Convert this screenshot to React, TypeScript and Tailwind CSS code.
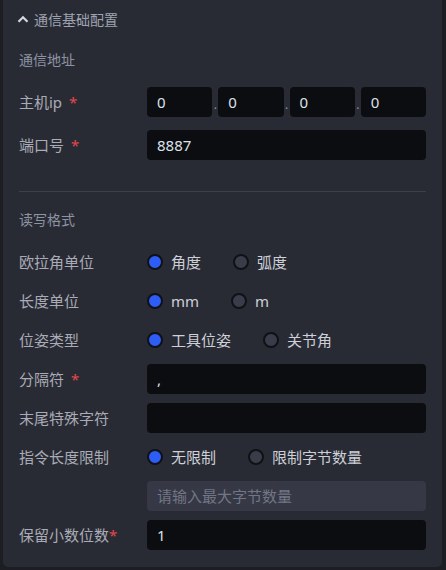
import React from "react";

const font = { fontFamily: "'Noto Sans', 'Noto Sans CJK SC', sans-serif" };

const Req = ({ tight }: { tight?: boolean }) => (
  <span className={`text-[#e5484d] ${tight ? "" : "ml-[7px]"}`}>*</span>
);

const Row = ({ label, children }: { label: React.ReactNode; children: React.ReactNode }) => (
  <div className="flex h-[30px] items-center">
    <div className="w-[128px] shrink-0 text-[15px] text-[#a9acb6]">{label}</div>
    <div className="flex flex-1 items-center">{children}</div>
  </div>
);

const Input = ({ value, placeholder, disabled }: { value?: string; placeholder?: string; disabled?: boolean }) => (
  <div
    className={`flex h-[30px] flex-1 items-center rounded-[4px] px-[10px] text-[15px] ${
      disabled ? "bg-[#363846] text-[#727684]" : "bg-[#0c0d11] text-[#dde1eb]"
    }`}
  >
    {value || placeholder}
  </div>
);

const Radio = ({ options, active }: { options: string[]; active: number }) => (
  <div className="flex items-center gap-x-[32px]">
    {options.map((o, i) => (
      <div key={o} className="flex items-center gap-[8px] text-[15px] text-[#cdd0d8]">
        <span
          className={`h-[16px] w-[16px] rounded-full border-2 border-[#101116] ${
            i === active ? "bg-[#2d5cf6]" : "bg-[#3a3c49]"
          }`}
        />
        {o}
      </div>
    ))}
  </div>
);

export default function App() {
  return (
    <div className="flex h-[570px] w-[446px] bg-[#1d1e24] pl-[3px] pr-[4px]" style={font}>
      <div className="flex h-[567px] flex-1 flex-col rounded-b-[5px] bg-[#292b34] px-[16px]">
        <div className="flex h-[38px] items-center gap-[5px] text-[14px] text-[#9ea3b1]">
          <svg width="12" height="8" viewBox="0 0 12 8" className="ml-[-2px]">
            <polyline points="1.5,6.8 6,2.2 10.5,6.8" fill="none" stroke="#d4d7df" strokeWidth="2.2" />
          </svg>
          通信基础配置
        </div>
        <div className="mt-[12px] h-[20px] text-[14px] leading-[20px] text-[#8d93a4]">通信地址</div>
        <div className="mt-[17px] flex flex-col gap-[13px]">
          <Row label={<>主机ip<Req /></>}>
            {["0", "0", "0", "0"].map((v, i) => (
              <React.Fragment key={i}>
                {i > 0 && (
                  <span className="flex w-[6px] justify-center pt-[6px] text-[12px] text-[#8d919c]">.</span>
                )}
                <Input value={v} />
              </React.Fragment>
            ))}
          </Row>
          <Row label={<>端口号<Req /></>}>
            <Input value="8887" />
          </Row>
        </div>
        <div className="mt-[31px] h-px bg-[#3d3f4b]" />
        <div className="mt-[18px] h-[20px] text-[14px] leading-[20px] text-[#8d93a4]">读写格式</div>
        <div className="mt-[17px] flex flex-col gap-[9px]">
          <Row label="欧拉角单位">
            <Radio options={["角度", "弧度"]} active={0} />
          </Row>
          <Row label="长度单位">
            <Radio options={["mm", "m"]} active={0} />
          </Row>
          <Row label="位姿类型">
            <Radio options={["工具位姿", "关节角"]} active={0} />
          </Row>
          <Row label={<>分隔符<Req /></>}>
            <Input value="," />
          </Row>
          <Row label="末尾特殊字符">
            <Input value="" />
          </Row>
          <Row label="指令长度限制">
            <Radio options={["无限制", "限制字节数量"]} active={0} />
          </Row>
          <Row label="">
            <Input placeholder="请输入最大字节数量" disabled />
          </Row>
          <Row label={<>保留小数位数<Req tight /></>}>
            <Input value="1" />
          </Row>
        </div>
      </div>
    </div>
  );
}
